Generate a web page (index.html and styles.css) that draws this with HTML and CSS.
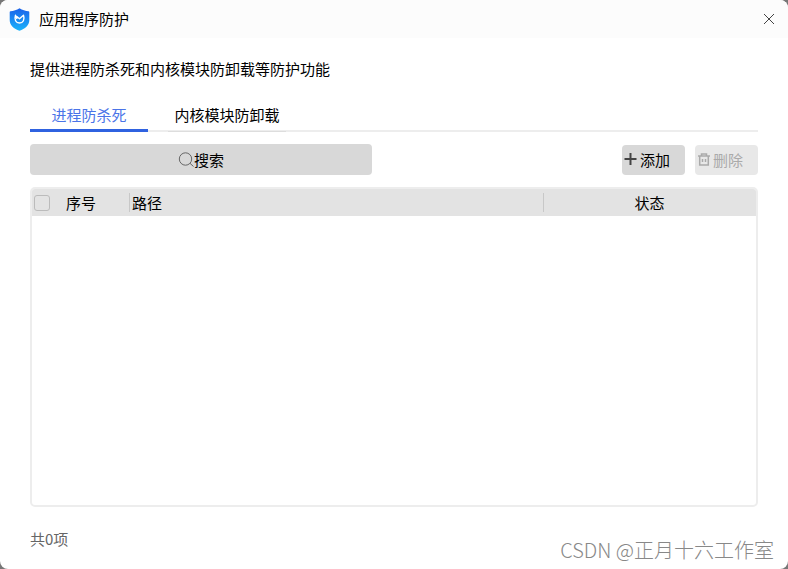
FILE: index.html
```html
<!DOCTYPE html>
<html lang="zh-CN">
<head>
    <meta charset="UTF-8">
    <meta name="viewport" content="width=device-width, initial-scale=1.0">
    <title>应用程序防护</title>
    <link rel="stylesheet" href="styles.css">
</head>
<body>
    <div class="window">
        <header class="titlebar">
            <svg class="logo" viewBox="0 0 20 23" aria-hidden="true">
                <defs>
                    <linearGradient id="shield" x1="0" y1="0" x2="0" y2="1">
                        <stop offset="0" stop-color="#1b62ea"/>
                        <stop offset="1" stop-color="#1cb4fb"/>
                    </linearGradient>
                </defs>
                <path fill="url(#shield)" d="M10 0.3C12.8 2.2 16 3 19 3.2Q19.8 3.3 19.8 4.2V12C19.8 17.5 15.5 20.8 10 22.8C4.5 20.8 0.2 17.5 0.2 12V4.2Q0.2 3.3 1 3.2C4 3 7.2 2.2 10 0.3Z"/>
                <path fill="none" stroke="#fff" stroke-width="1.4" stroke-linejoin="round" d="M7.5 11L6 7.2C4.6 11.5 6.3 15 10 15C13.7 15 15.4 11.5 14 7.2L10 10.8L7 8.2"/>
            </svg>
            <h1 class="title">应用程序防护</h1>
            <button type="button" class="close" aria-label="关闭">
                <svg width="12" height="12" viewBox="0 0 12 12"><path d="M1 1L11 11M11 1L1 11"/></svg>
            </button>
        </header>

        <main class="content">
            <p class="intro">提供进程防杀死和内核模块防卸载等防护功能</p>

            <div class="tabs" role="tablist">
                <button type="button" class="tab active" role="tab" aria-selected="true">进程防杀死</button>
                <button type="button" class="tab" role="tab" aria-selected="false">内核模块防卸载</button>
            </div>

            <div class="toolbar">
                <div class="search">
                    <svg class="search-icon" viewBox="0 0 16 16" aria-hidden="true"><circle cx="7.5" cy="7" r="6.2"/><path d="M12 11.3L15.5 14.5"/></svg>
                    <input type="text" placeholder="搜索" aria-label="搜索">
                </div>
                <button type="button" class="btn">
                    <svg width="14" height="14" viewBox="0 0 14 14" aria-hidden="true"><path d="M6.5 0V12M0.5 6H12.5"/></svg>
                    添加
                </button>
                <button type="button" class="btn" disabled>
                    <svg width="14" height="14" viewBox="0 0 14 14" aria-hidden="true"><path d="M1 3H13M4.5 3V1H9.5V3M2.7 3V12H11.3V3M5.5 6V9M8.5 6V9"/></svg>
                    删除
                </button>
            </div>

            <div class="panel">
                <table class="list">
                    <thead>
                        <tr>
                            <th class="col-check"><input type="checkbox" aria-label="全选"></th>
                            <th class="col-no">序号</th>
                            <th class="col-path">路径</th>
                            <th class="col-state">状态</th>
                        </tr>
                    </thead>
                    <tbody></tbody>
                </table>
            </div>

            <p class="total">共0项</p>
        </main>

        <span class="watermark">CSDN @正月十六工作室</span>
    </div>
</body>
</html>
```

FILE: styles.css
```css
* {
    box-sizing: border-box;
}
body {
    margin: 0;
    background-color: #777;
    color: #000;
    font-family: "Noto Sans CJK SC", sans-serif;
    font-size: 15px;
    line-height: 20px;
}
button,
input {
    font: inherit;
    color: inherit;
}
button {
    border: none;
    padding: 0;
    background: none;
    cursor: pointer;
}
svg {
    fill: none;
    stroke: #444;
}
.window {
    position: relative;
    display: flex;
    flex-direction: column;
    min-height: 100vh;
    background-color: #fff;
    border-radius: 8px;
    overflow: hidden;
}

/* title bar */
.titlebar {
    display: flex;
    align-items: center;
    height: 38px;
    padding: 0 13px 0 9px;
    background-color: #fcfcfc;
}
.logo {
    width: 21px;
    height: 23px;
    stroke: none;
}
.title {
    flex: 1;
    margin: 0 0 0 9px;
    font-size: 15px;
    font-weight: normal;
}
.close {
    display: flex;
}

.content {
    flex: 1;
    display: flex;
    flex-direction: column;
    padding: 21px 30px 20px;
}
.intro {
    margin: 0;
}

/* tabs */
.tabs {
    display: flex;
    gap: 20px;
    margin-top: 21px;
    box-shadow: inset 0 -2px #ededed;
}
.tab {
    width: 118px;
    height: 32px;
    padding-bottom: 2px;
    border-bottom: 1px solid #ddd;
    white-space: nowrap;
}
.tab.active {
    padding-bottom: 0;
    border-bottom: 3px solid #2f62e0;
    color: #4a74e8;
}

/* search and buttons */
.toolbar {
    display: flex;
    align-items: center;
    gap: 10px;
    margin-top: 12px;
}
.search {
    position: relative;
    width: 47%;
    margin-right: auto;
}
.search input {
    display: block;
    width: 100%;
    height: 31px;
    padding: 0 0 0 16px;
    border: none;
    border-radius: 4px;
    background-color: #d8d8d8;
    text-align: center;
}
.search input::placeholder {
    color: #000;
    opacity: 1;
}
.search-icon {
    position: absolute;
    top: 8px;
    left: calc(50% - 23px);
    width: 16px;
    height: 16px;
    stroke: #666;
}
.btn {
    display: flex;
    align-items: center;
    gap: 2px;
    width: 63px;
    height: 30px;
    padding-left: 2px;
    border-radius: 4px;
    background-color: #d8d8d8;
    white-space: nowrap;
}
.btn svg {
    stroke-width: 2;
}
.btn:disabled {
    background-color: #e8e8e8;
    color: #aaa;
    cursor: default;
}
.btn:disabled svg {
    stroke: #aaa;
    stroke-width: 1.5;
}

/* list */
.panel {
    flex: 1;
    margin-top: 12px;
    border: 2px solid #ededed;
    border-radius: 5px;
    overflow: hidden;
}
.list {
    width: 100%;
    table-layout: fixed;
    border-collapse: collapse;
}
.list th {
    height: 27px;
    padding: 1px 0 0;
    background-color: #e3e3e3;
    font-weight: normal;
    text-align: left;
}
.list .col-check {
    width: 34px;
    padding: 0 0 0 2px;
}
.col-check input {
    display: block;
    appearance: none;
    width: 16px;
    height: 16px;
    margin: 0;
    border: 1px solid #bbb;
    border-radius: 3px;
}
.col-no {
    width: 63px;
}
.list .col-path,
.list .col-state {
    background-image: linear-gradient(#c8c8c8, #c8c8c8);
    background-repeat: no-repeat;
    background-position: left center;
    background-size: 1px 19px;
}
.list .col-path {
    padding-left: 3px;
}
.list .col-state {
    width: 213px;
    text-align: center;
}

.total {
    margin: 22px 0 0;
    color: #666;
}
.watermark {
    position: absolute;
    right: 14px;
    bottom: 7px;
    color: #888;
    font-size: 20px;
    font-weight: 300;
    line-height: 24px;
}
```
